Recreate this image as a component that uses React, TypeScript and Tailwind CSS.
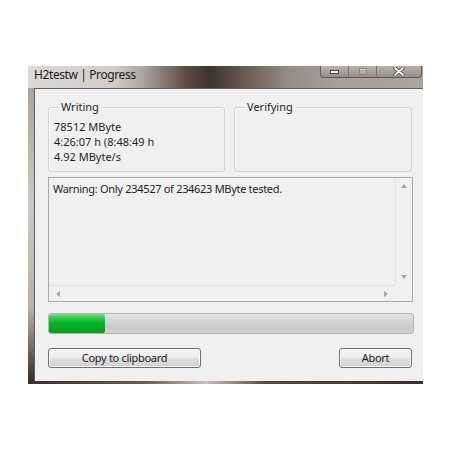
import React from "react";

function ScrollArrow({ dir }: { dir: "up" | "down" | "left" | "right" }) {
  const pts = {
    up: "1,5 4,1 7,5",
    down: "1,1 4,5 7,1",
    left: "5,1 1,4 5,7",
    right: "1,1 5,4 1,7",
  }[dir];
  const size = dir === "up" || dir === "down" ? { w: 8, h: 6 } : { w: 6, h: 8 };
  return (
    <svg width={size.w} height={size.h} viewBox={`0 0 ${size.w} ${size.h}`}>
      <polygon points={pts} fill="#a3a3a3" />
    </svg>
  );
}

function CaptionButtons() {
  return (
    <div className="mr-[1px] flex h-[12px] overflow-hidden rounded-b-[4px] border border-t-0 border-[#5e5852] bg-[linear-gradient(180deg,#b9b2ab_0%,#a59d96_60%,#978e87_100%)]">
      <div className="flex w-[28px] items-center justify-center border-r border-[#7b736c]">
        <div className="h-[4px] w-[9px] border border-[#4a4540] bg-[#f4f4f4]" />
      </div>
      <div className="flex w-[28px] items-center justify-center border-r border-[#7b736c]">
        <div className="h-[7px] w-[8px] border border-[#8e8780] bg-[#b6aea7] shadow-[inset_0_1px_0_#d8d3ce]" />
      </div>
      <div className="flex w-[44px] items-center justify-center">
        <svg width="12" height="9" viewBox="0 0 12 9">
          <path d="M2 1 L10 8 M10 1 L2 8" stroke="#4a4540" strokeWidth="3.4" strokeLinecap="round" />
          <path d="M2 1 L10 8 M10 1 L2 8" stroke="#f6f6f6" strokeWidth="1.8" strokeLinecap="round" />
        </svg>
      </div>
    </div>
  );
}

function GroupBox({ title, lines }: { title: string; lines: string[] }) {
  return (
    <fieldset className="h-[71px] rounded-[3px] border border-[#d2d2d2] pl-[5px] pt-[6px] shadow-[inset_1px_1px_0_#fafafa]">
      <legend className="ml-[5px] px-[2px] text-[11px] leading-[12px]">{title}</legend>
      {lines.map((l) => (
        <div key={l} className="text-[11px] leading-[15px]">
          {l}
        </div>
      ))}
    </fieldset>
  );
}

function WinButton({ label, width }: { label: string; width: string }) {
  return (
    <button
      className={`${width} h-[20px] rounded-[3px] border border-[#707070] bg-[linear-gradient(180deg,#f4f4f4_0%,#ececec_48%,#dedede_52%,#d0d0d0_100%)] text-[11px] tracking-[-0.3px] leading-[18px] text-[#1a1a1a] shadow-[inset_0_0_0_1px_#fbfbfb]`}
    >
      {label}
    </button>
  );
}

export default function App() {
  return (
    <div className="h-[452px] w-[452px] overflow-hidden bg-white pt-[66px] pl-[28px] font-['Noto_Sans',sans-serif] text-[#1e1e1e]">
      <div className="flex w-[395px] flex-col">
        {/* title bar */}
        <div className="flex h-[22px] items-start bg-[linear-gradient(90deg,#dcd9d6_0%,#d2cdc9_22%,#a79e97_30%,#5a4c42_40%,#3d322c_46%,#6e6157_56%,#978d85_66%,#a69e97_78%,#aca59e_100%)]">
          <div className="flex-1 pl-[6px] pt-[1px] text-[12px] tracking-[-0.4px] leading-[15px] text-[#1b1b1b]">
            H2testw | Progress
          </div>
          <CaptionButtons />
        </div>

        <div className="flex">
          <div className="w-[6px] bg-[linear-gradient(180deg,#aaa39c_0%,#cdc8c3_40%,#b8b1ab_75%,#3a2e28_100%)]" />

          {/* client area */}
          <div className="flex h-[293px] w-[389px] flex-col border-t border-l border-[#5f5f5f] bg-[#f0f0f0] pl-[13px] pr-[10px] pt-[12px]">
            <div className="flex gap-[9px]">
              <div className="w-[177px]">
                <GroupBox title="Writing" lines={["78512 MByte", "4:26:07 h (8:48:49 h", "4.92 MByte/s"]} />
              </div>
              <div className="w-[178px]">
                <GroupBox title="Verifying" lines={[]} />
              </div>
            </div>

            {/* memo */}
            <div className="mt-[5px] flex h-[125px] w-[365px] flex-col border border-[#a9a9a9] bg-[#f0f0f0]">
              <div className="flex flex-1">
                <div className="flex-1 pl-[4px] pt-[3px] text-[11px] tracking-[-0.3px] leading-[15px]">
                  Warning: Only 234527 of 234623 MByte tested.
                </div>
                <div className="flex w-[17px] flex-col items-center justify-between border-l border-[#e2e2e2] bg-[#f1f1f1] pt-[5px] pb-[5px]">
                  <ScrollArrow dir="up" />
                  <ScrollArrow dir="down" />
                </div>
              </div>
              <div className="flex h-[16px]">
                <div className="flex flex-1 items-center justify-between border-t border-[#e2e2e2] bg-[#f1f1f1] px-[6px]">
                  <ScrollArrow dir="left" />
                  <ScrollArrow dir="right" />
                </div>
                <div className="w-[17px] bg-[#f0f0f0]" />
              </div>
            </div>

            {/* progress */}
            <div className="mt-[11px] flex h-[21px] w-[366px] overflow-hidden rounded-[3px] border border-[#b4b4b4] bg-[linear-gradient(180deg,#e4e4e4_0%,#d6d6d6_35%,#cacaca_70%,#d2d2d2_100%)]">
              <div className="h-full w-[56px] rounded-r-[2px] bg-[linear-gradient(180deg,#7fe38c_0%,#2fcd48_20%,#06b82a_45%,#04a424_75%,#0b9a23_100%)]" />
            </div>

            {/* buttons */}
            <div className="mt-[14px] flex justify-between pr-[1px]">
              <WinButton label="Copy to clipboard" width="w-[153px]" />
              <WinButton label="Abort" width="w-[73px]" />
            </div>
          </div>
        </div>

        <div className="h-[3px] bg-[linear-gradient(90deg,#3a2e2a_0%,#6e5b55_30%,#c8c0bb_45%,#5a4841_60%,#3c2f2b_100%)]" />
      </div>
    </div>
  );
}
